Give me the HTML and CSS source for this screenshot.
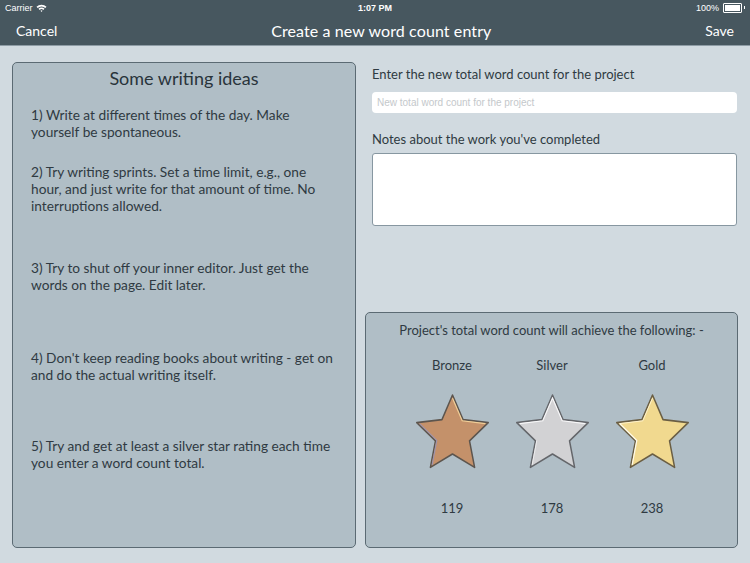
FILE: index.html
```html
<!DOCTYPE html>
<html lang="en">
<head>
    <meta charset="UTF-8">
    <title>Create a new word count entry</title>
    <link rel="stylesheet" href="styles.css">
</head>
<body>

    <!-- Status bar + navigation -->
    <div class="header">
        <div class="status-bar">
            <div class="status-left">Carrier
                <svg class="wifi" width="11" height="8" viewBox="0 0 11 8">
                    <path d="M0.5 2.8 A7 7 0 0 1 10.5 2.8 L9.3 4 A5.3 5.3 0 0 0 1.7 4 Z" fill="#fff"/>
                    <path d="M2.5 4.8 A4.2 4.2 0 0 1 8.5 4.8 L7.3 6 A2.5 2.5 0 0 0 3.7 6 Z" fill="#fff"/>
                    <path d="M4.5 6.8 L5.5 7.9 L6.5 6.8 A1.4 1.4 0 0 0 4.5 6.8 Z" fill="#fff"/>
                </svg>
            </div>
            <div class="status-time">1:07 PM</div>
            <div class="status-right">100%
                <span class="battery"><span class="battery-level"></span></span><span class="battery-nub"></span>
            </div>
        </div>
        <div class="nav-bar">
            <span class="nav-button">Cancel</span>
            <span class="nav-title">Create a new word count entry</span>
            <span class="nav-button">Save</span>
        </div>
    </div>

    <div class="content">
        <!-- Writing ideas -->
        <div class="panel ideas">
            <h2>Some writing ideas</h2>
            <p class="idea idea-1">1) Write at different times of the day. Make yourself be spontaneous.</p>
            <p class="idea idea-2">2) Try writing sprints. Set a time limit, e.g., one hour, and just write for that amount of time. No interruptions allowed.</p>
            <p class="idea idea-3">3) Try to shut off your inner editor. Just get the words on the page. Edit later.</p>
            <p class="idea idea-4">4) Don't keep reading books about writing - get on and do the actual writing itself.</p>
            <p class="idea idea-5">5) Try and get at least a silver star rating each time you enter a word count total.</p>
        </div>

        <div class="entry">
            <div class="form">
                <label for="total">Enter the new total word count for the project</label>
                <input type="text" id="total" placeholder="New total word count for the project">
                <label for="notes" class="notes-label">Notes about the work you've completed</label>
                <textarea id="notes"></textarea>
            </div>

            <!-- Star ratings -->
            <div class="panel awards">
                <div class="awards-title">Project's total word count will achieve the following: -</div>
                <div class="stars">
                    <div class="award">
                        <div class="award-name">Bronze</div>
                        <svg class="star" width="79" height="80" viewBox="0 0 84 80" preserveAspectRatio="none">
                            <polygon points="42,4 53.2,28.6 80,31.6 60.1,49.9 65.5,76.4 42,63 18.5,76.4 23.9,49.9 4,31.6 30.8,28.6" fill="#c4916a" stroke="#5c554e" stroke-width="1.6" stroke-linejoin="round"/>
                            <polyline points="42,7.2 52.3,29.8 77,32.6" fill="none" stroke="#f0cf98" stroke-width="1.2"/>
                            <polyline points="20.4,73.8 25.3,49.4 7,32.6" fill="none" stroke="#9d93ad" stroke-width="1.2"/>
                        </svg>
                        <div class="award-count">119</div>
                    </div>
                    <div class="award">
                        <div class="award-name">Silver</div>
                        <svg class="star" width="79" height="80" viewBox="0 0 84 80" preserveAspectRatio="none">
                            <polygon points="42,4 53.2,28.6 80,31.6 60.1,49.9 65.5,76.4 42,63 18.5,76.4 23.9,49.9 4,31.6 30.8,28.6" fill="#d2d2d4" stroke="#64666a" stroke-width="1.6" stroke-linejoin="round"/>
                            <polyline points="7,32.6 31.7,29.8 42,7.2 52.3,29.8 77,32.6" fill="none" stroke="#f7f7f8" stroke-width="1.2"/>
                            <polyline points="20.4,73.8 25.3,49.4" fill="none" stroke="#ededee" stroke-width="1"/>
                        </svg>
                        <div class="award-count">178</div>
                    </div>
                    <div class="award">
                        <div class="award-name">Gold</div>
                        <svg class="star" width="79" height="80" viewBox="0 0 84 80" preserveAspectRatio="none">
                            <polygon points="42,4 53.2,28.6 80,31.6 60.1,49.9 65.5,76.4 42,63 18.5,76.4 23.9,49.9 4,31.6 30.8,28.6" fill="#f1d98f" stroke="#6a5e44" stroke-width="1.6" stroke-linejoin="round"/>
                            <polyline points="42,7.2 31.7,29.8 7,32.6" fill="none" stroke="#fff3cc" stroke-width="1"/>
                            <polyline points="20.4,73.8 25.3,49.4 7,32.6" fill="none" stroke="#fffbea" stroke-width="1.3"/>
                        </svg>
                        <div class="award-count">238</div>
                    </div>
                </div>
            </div>
        </div>
    </div>

</body>
</html>
```

FILE: styles.css
```css
body {
    margin: 0;
    width: 750px;
    height: 563px;
    overflow: hidden;
    background-color: #d1dae0;
    font-family: 'Lato', 'Noto Sans', sans-serif;
    color: #2f3a42;
}
.header {
    background-color: #47575f;
    color: white;
    border-bottom: 1px solid #8e9ca5;
}
.status-bar {
    height: 15px;
    display: flex;
    align-items: center;
    justify-content: space-between;
    padding: 0 5px;
    font-family: 'Liberation Sans', Arial, sans-serif;
    font-size: 9px;
}
.status-left, .status-right {
    width: 80px;
    display: flex;
    align-items: center;
    gap: 3px;
}
.status-right {
    justify-content: flex-end;
    gap: 2px;
}
.status-time {
    font-weight: bold;
}
.battery {
    display: inline-block;
    width: 15px;
    height: 6px;
    border: 1px solid white;
    border-radius: 1px;
    padding: 1px;
    box-sizing: content-box;
    margin-left: 2px;
}
.battery-level {
    display: block;
    width: 100%;
    height: 100%;
    background: white;
}
.battery-nub {
    display: inline-block;
    width: 1px;
    height: 3px;
    background: white;
}
.nav-bar {
    height: 30px;
    display: flex;
    align-items: center;
    justify-content: space-between;
    padding: 0 16px 0 16px;
}
.nav-button {
    font-size: 14px;
}
.nav-title {
    font-size: 16px;
    letter-spacing: 0.1px;
}
.content {
    display: flex;
    padding: 16px 12px 0 12px;
    gap: 9px;
}
.panel {
    background-color: #b0bec6;
    border: 1px solid #5b6a73;
    border-radius: 5px;
    box-sizing: border-box;
}
.ideas {
    width: 344px;
    height: 486px;
    padding: 0 18px;
}
.ideas h2 {
    margin: 4px 0 0;
    font-size: 18px;
    font-weight: normal;
    text-align: center;
    color: #29343b;
}
.idea {
    margin: 0;
    font-size: 13.7px;
    line-height: 17px;
}
.idea-1 { margin-top: 17px; }
.idea-2 { margin-top: 23px; }
.idea-3 { margin-top: 45px; }
.idea-4 { margin-top: 56px; }
.idea-5 { margin-top: 54px; }
.entry {
    width: 373px;
    display: flex;
    flex-direction: column;
}
.form {
    padding-left: 7px;
    height: 250px;
}
label {
    display: block;
    font-size: 13px;
    margin-top: 4px;
}
.notes-label {
    margin-top: 18px;
}
input, textarea {
    display: block;
    box-sizing: border-box;
    width: 365px;
    border: none;
    background: white;
    font-family: 'Liberation Sans', Arial, sans-serif;
}
input {
    height: 21px;
    margin-top: 10px;
    border-radius: 4px;
    padding: 0 5px;
    font-size: 10px;
}
input::placeholder {
    color: #c4c8cb;
}
textarea {
    height: 73px;
    margin-top: 6px;
    border: 1px solid #8797a1;
    border-radius: 3px;
    resize: none;
}
.awards {
    height: 236px;
    text-align: center;
}
.awards-title {
    font-size: 13px;
    margin-top: 9px;
}
.stars {
    display: flex;
    justify-content: center;
    gap: 16px;
    margin-top: 19px;
    padding-left: 1px;
}
.award {
    width: 84px;
}
.award-name, .award-count {
    font-size: 13px;
}
.star {
    display: block;
    margin: 18px auto 0;
}
.award-count {
    margin-top: 29px;
}
```
